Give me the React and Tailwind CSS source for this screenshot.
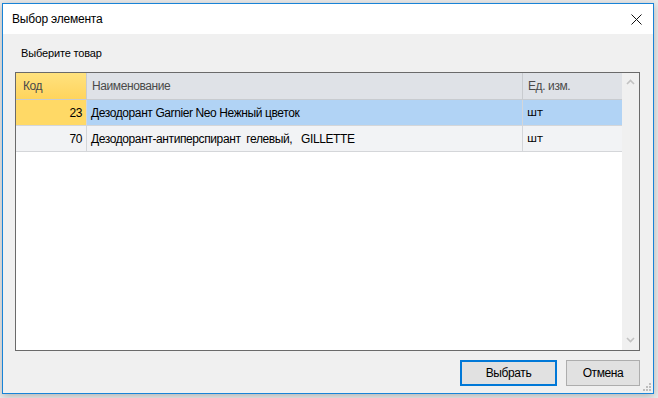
import React from 'react';

const rows = [
    { code: 23, name: 'Дезодорант Garnier Neo Нежный цветок', unit: 'шт', selected: true },
    { code: 70, name: 'Дезодорант-антиперспирант  гелевый,   GILLETTE', unit: 'шт', selected: false },
];

const Chevron = ({ up }) => (
    <svg width="9" height="6" viewBox="0 0 9 6" className="block">
        <path d={up ? 'M1 5 L4.5 1.5 L8 5' : 'M1 1 L4.5 4.5 L8 1'} fill="none" stroke="#c2c2c2" strokeWidth="1.6" />
    </svg>
);

const App = () => {
    return (
        <div className="w-[658px] h-[398px] bg-[#ebebeb] pl-[2px] pt-[3px] overflow-hidden" style={{ fontFamily: '"Liberation Sans", Arial, sans-serif' }}>
            <div className="w-[652px] h-[391px] border border-[#1883d7] bg-[#f0f0f0] flex flex-col shadow-[0_2px_8px_rgba(0,0,0,0.25)]">
                {/* Title bar */}
                <div className="h-[30px] bg-white flex items-center justify-between pl-[9px] pr-[11px] shrink-0">
                    <span className="text-[12px] tracking-[-0.2px] text-black">Выбор элемента</span>
                    <svg width="11" height="11" viewBox="0 0 11 11">
                        <path d="M0.5 0.5 L10.5 10.5 M10.5 0.5 L0.5 10.5" stroke="#111" strokeWidth="1" />
                    </svg>
                </div>

                {/* Body */}
                <div className="flex-1 flex flex-col pl-[12px] pr-[13px]">
                    <div className="h-[38px] flex items-center pl-[6px] text-[11px] tracking-[-0.15px] text-black">Выберите товар</div>

                    <div className="h-[279px] border border-[#6a6a6a] bg-white flex tracking-[-0.4px]">
                        <div className="flex-1 flex flex-col">
                            {/* Header */}
                            <div className="h-[27px] flex border-b border-[#c8cbcf] text-[12px] text-[#4a4a4a]">
                                <div className="w-[71px] border-r border-[#c8cbcf] bg-gradient-to-b from-[#ffe27e] to-[#ffd45c] flex items-center pl-[7px]">Код</div>
                                <div className="w-[436px] border-r border-[#c8cbcf] bg-[#dfe2e7] flex items-center pl-[5px]">Наименование</div>
                                <div className="flex-1 bg-[#dfe2e7] flex items-center pl-[5px]">Ед. изм.</div>
                            </div>
                            {rows.map(r => (
                                <div key={r.code} className="h-[26px] flex border-b border-[#d4d6d9] text-[12px] text-black">
                                    <div className={`w-[71px] border-r border-[#d4d6d9] flex items-center justify-end pr-[4px] ${r.selected ? 'bg-[#ffd966]' : 'bg-[#f2f3f5]'}`}>{r.code}</div>
                                    <div className={`w-[436px] border-r border-[#d4d6d9] flex items-center pl-[4px] whitespace-pre ${r.selected ? 'bg-[#b1d3f5]' : 'bg-[#f2f3f5]'}`}>{r.name}</div>
                                    <div className={`flex-1 flex items-center pl-[4px] pt-[2px] text-[11px] ${r.selected ? 'bg-[#b1d3f5]' : 'bg-[#f2f3f5]'}`} style={{ fontFamily: '"DejaVu Sans", sans-serif' }}>{r.unit}</div>
                                </div>
                            ))}
                        </div>
                        {/* Scrollbar */}
                        <div className="w-[17px] bg-[#f0f0f0] flex flex-col items-center justify-between pt-[6px] pb-[7px]">
                            <Chevron up />
                            <Chevron />
                        </div>
                    </div>

                    {/* Buttons */}
                    <div className="flex justify-end gap-[9px] mt-[9px] tracking-[-0.4px]">
                        <button className="w-[97px] h-[26px] bg-[#e1e1e1] border-2 border-[#0078d7] text-[12px] text-black">Выбрать</button>
                        <button className="w-[74px] h-[26px] bg-[#e1e1e1] border border-[#adadad] text-[12px] text-black">Отмена</button>
                    </div>
                </div>

                {/* Resize grip */}
                <div className="h-0 relative">
                    <svg width="9" height="9" viewBox="0 0 9 9" className="absolute right-[2px] bottom-[2px]">
                        {[[7, 1], [4, 4], [7, 4], [1, 7], [4, 7], [7, 7]].map(([x, y], i) => (
                            <rect key={i} x={x} y={y} width="2" height="2" fill="#bdbdbd" />
                        ))}
                    </svg>
                </div>
            </div>
        </div>
    );
};

export default App;
